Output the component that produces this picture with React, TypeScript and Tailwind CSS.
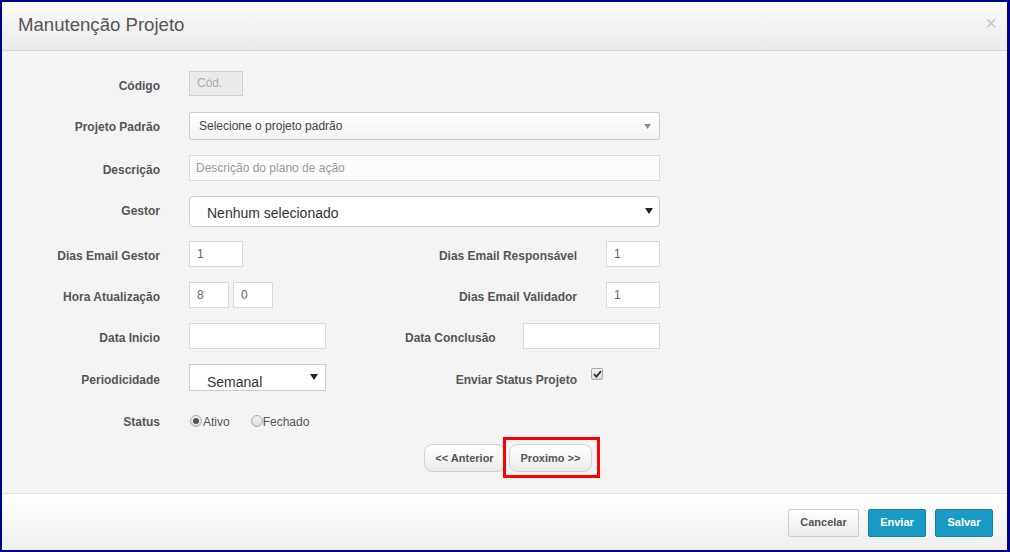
import React from 'react'

const FONT = { fontFamily: '"Liberation Sans", Arial, Helvetica, sans-serif' }

function Label({ children, className = '' }: { children: React.ReactNode; className?: string }) {
  return (
    <div className={`text-[12px] font-bold text-[#555] leading-none ${className}`}>{children}</div>
  )
}

function TextBox({ value, className = '' }: { value?: string; className?: string }) {
  return (
    <div
      className={`h-[25px] border border-[#d8d8d8] bg-white px-[7px] flex items-center text-[12px] text-[#666] ${className}`}
    >
      {value}
    </div>
  )
}

function Caret({ className = '' }: { className?: string }) {
  return (
    <svg width="8" height="6" viewBox="0 0 8 6" className={className}>
      <path d="M0 0 L8 0 L4 6 Z" fill="currentColor" />
    </svg>
  )
}

function Radio({ checked }: { checked?: boolean }) {
  return (
    <span className="w-[12px] h-[12px] rounded-full border border-[#a9a9a9] bg-gradient-to-b from-[#f2f2f2] to-[#dcdcdc] flex items-center justify-center">
      {checked && <span className="w-[6px] h-[6px] rounded-full bg-[#555]" />}
    </span>
  )
}

export default function App() {
  return (
    <div style={FONT} className="w-[1010px] h-[552px] border-2 border-r-[3px] border-[#00008a] bg-[#f4f4f4] flex flex-col overflow-hidden">
      {/* Header */}
      <div className="h-[49px] shrink-0 border-b border-[#d5d5d5] bg-gradient-to-b from-[#fbfbfb] to-[#ebebeb] flex items-center justify-between pl-[16px] pr-[10px]">
        <h1 className="text-[18.6px] text-[#555] leading-none pb-[1px]">Manutenção Projeto</h1>
        <span className="text-[20px] text-[#c6c6c6] leading-none -mt-[6px]">×</span>
      </div>

      {/* Body */}
      <div className="flex-1 flex flex-col pt-[20px]">
        {/* Código */}
        <div className="flex items-center h-[25px]">
          <Label className="w-[158px] text-right pt-[4px]">Código</Label>
          <div className="ml-[29px] w-[54px] h-[25px] border border-[#d0d0d0] bg-[#ebebeb] px-[7px] flex items-center text-[12px] text-[#aaa] pb-[1px]">
            Cód.
          </div>
        </div>

        {/* Projeto Padrão */}
        <div className="flex items-center h-[28px] mt-[16px]">
          <Label className="w-[158px] text-right pt-[2px]">Projeto Padrão</Label>
          <div className="ml-[29px] w-[471px] h-[28px] border border-[#ccc] rounded-[2px] bg-gradient-to-b from-white to-[#f3f3f3] pl-[9px] pr-[8px] flex items-center justify-between text-[12px] text-[#444]">
            <span>Selecione o projeto padrão</span>
            <Caret className="text-[#888] w-[7px] h-[5px]" />
          </div>
        </div>

        {/* Descrição */}
        <div className="flex items-center h-[26px] mt-[15px]">
          <Label className="w-[158px] text-right pt-[4px]">Descrição</Label>
          <div className="ml-[29px] w-[471px] h-[26px] border border-[#d8d8d8] bg-[#fcfcfc] px-[6px] flex items-center text-[12px] text-[#999]">
            Descrição do plano de ação
          </div>
        </div>

        {/* Gestor */}
        <div className="flex items-center h-[31px] mt-[15px]">
          <Label className="w-[158px] text-right -mt-[2px]">Gestor</Label>
          <div className="ml-[29px] w-[471px] h-[31px] border border-[#ccc] rounded-[4px] bg-white pl-[17px] pr-[6px] flex items-center justify-between text-[14px] text-[#333]">
            <span className="pt-[3px]">Nenhum selecionado</span>
            <Caret className="text-[#222] -mt-[1px]" />
          </div>
        </div>

        {/* Dias Email */}
        <div className="flex items-center h-[26px] mt-[14px]">
          <Label className="w-[158px] text-right pt-[4px]">Dias Email Gestor</Label>
          <TextBox value="1" className="ml-[29px] w-[54px] h-[26px]" />
          <Label className="ml-[140px] w-[194px] text-right pt-[4px]">Dias Email Responsável</Label>
          <TextBox value="1" className="ml-[29px] w-[54px] h-[26px]" />
        </div>

        {/* Hora Atualização */}
        <div className="flex items-center h-[26px] mt-[15px]">
          <Label className="w-[158px] text-right pt-[4px]">Hora Atualização</Label>
          <TextBox value="8" className="ml-[29px] w-[40px] h-[26px]" />
          <TextBox value="0" className="ml-[4px] w-[40px] h-[26px]" />
          <Label className="ml-[110px] w-[194px] text-right pt-[4px]">Dias Email Validador</Label>
          <TextBox value="1" className="ml-[29px] w-[54px] h-[26px]" />
        </div>

        {/* Datas */}
        <div className="flex items-center h-[26px] mt-[15px]">
          <Label className="w-[158px] text-right pt-[4px]">Data Inicio</Label>
          <TextBox className="ml-[29px] w-[137px] h-[26px]" />
          <Label className="ml-[79px] w-[118px] pt-[4px]">Data Conclusão</Label>
          <TextBox className="w-[137px] h-[26px]" />
        </div>

        {/* Periodicidade / Enviar Status */}
        <div className="flex items-start h-[27px] mt-[15px]">
          <Label className="w-[158px] text-right pt-[10px]">Periodicidade</Label>
          <div className="ml-[29px] w-[137px] h-[27px] border border-[#ccc] bg-white pl-[17px] pr-[7px] flex justify-between overflow-hidden">
            <span className="text-[14px] text-[#333] leading-none pt-[10px]">Semanal</span>
            <Caret className="text-[#222] mt-[9px]" />
          </div>
          <Label className="ml-[57px] w-[194px] text-right pt-[10px]">Enviar Status Projeto</Label>
          <span className="ml-[14px] mt-[4px] w-[12px] h-[12px] border border-[#aaa] rounded-[2px] bg-gradient-to-b from-[#f4f4f4] to-[#d9d9d9] flex items-center justify-center">
            <svg width="9" height="8" viewBox="0 0 9 8">
              <path d="M1 4.2 L3.4 6.6 L8 1.2" stroke="#333" strokeWidth="1.8" fill="none" />
            </svg>
          </span>
        </div>

        {/* Status */}
        <div className="flex items-center h-[18px] mt-[21px]">
          <Label className="w-[158px] text-right pt-[2px]">Status</Label>
          <div className="ml-[30px] flex items-center text-[12px] text-[#555]">
            <Radio checked />
            <span className="ml-[1px] pt-[2px]">Ativo</span>
          </div>
          <div className="ml-[21px] flex items-center text-[12px] text-[#555]">
            <Radio />
            <span className="pt-[2px]">Fechado</span>
          </div>
        </div>

        {/* Navegação */}
        <div className="flex items-center mt-[14px] ml-[422px] gap-[4px]">
          <button className="w-[81px] h-[28px] rounded-[8px] border border-[#d0d0d0] bg-gradient-to-b from-white to-[#ececec] text-[11px] font-bold text-[#555]">
            &lt;&lt; Anterior
          </button>
          <div className="relative">
            <button className="w-[83px] h-[28px] rounded-[8px] border border-[#d0d0d0] bg-gradient-to-b from-white to-[#ececec] text-[11px] font-bold text-[#555]">
              Proximo &gt;&gt;
            </button>
            <div className="absolute -left-[6px] -top-[7px] w-[97px] h-[41px] border-[3px] border-[#ff0000]" />
          </div>
        </div>
      </div>

      {/* Footer */}
      <div className="h-[57px] shrink-0 border-t border-[#e0e0e0] bg-gradient-to-b from-white to-[#efefef] flex items-center justify-end pr-[14px] gap-[9px] pt-[1px]">
        <button className="w-[71px] h-[28px] rounded-[2px] border border-[#ccc] bg-gradient-to-b from-white to-[#ececec] text-[11px] font-bold text-[#555]">
          Cancelar
        </button>
        <button className="w-[58px] h-[28px] rounded-[2px] border border-[#147fa3] bg-[#1a9bc5] text-[11px] font-bold text-white">
          Enviar
        </button>
        <button className="w-[58px] h-[28px] rounded-[2px] border border-[#147fa3] bg-[#1a9bc5] text-[11px] font-bold text-white">
          Salvar
        </button>
      </div>
    </div>
  )
}
